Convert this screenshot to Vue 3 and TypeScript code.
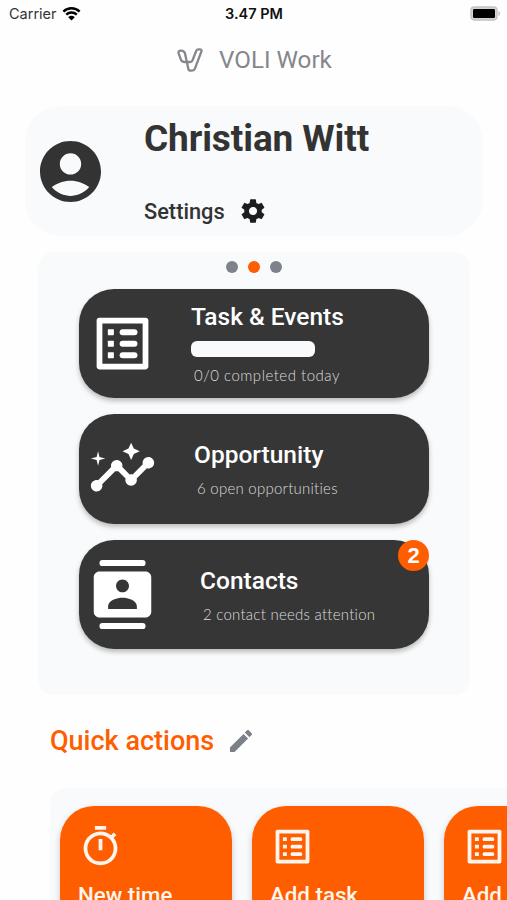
<script setup lang="ts">
interface Summary {
  kind: 'tasks' | 'opportunity' | 'contacts'
  title: string
  detail: string
  badge?: number
}

interface QuickAction {
  icon: 'timer' | 'list'
  label: string
}

const pages = [0, 1, 2]
const activePage = 1

const summaries: Summary[] = [
  { kind: 'tasks', title: 'Task & Events', detail: '0/0 completed today' },
  { kind: 'opportunity', title: 'Opportunity', detail: '6 open opportunities' },
  { kind: 'contacts', title: 'Contacts', detail: '2 contact needs attention', badge: 2 },
]

const actions: QuickAction[] = [
  { icon: 'timer', label: 'New time' },
  { icon: 'list', label: 'Add task' },
  { icon: 'list', label: 'Add event' },
]
</script>

<template>
  <main class="screen">
    <div class="status">
      <div class="carrier">
        <span>Carrier</span>
        <svg class="wifi" viewBox="0 0 18 14">
          <path d="M1.3 5.2a11 11 0 0 1 15.4 0" />
          <path d="M4 8.1a7.2 7.2 0 0 1 10 0" />
          <path class="wedge" d="M9 13.6 5.9 10.5a4.4 4.4 0 0 1 6.2 0z" />
        </svg>
      </div>
      <span class="clock">3.47 PM</span>
      <svg class="battery" viewBox="0 0 31 15">
        <rect x="1" y="1" width="26" height="13" rx="3.4" />
        <rect class="level" x="3" y="3" width="22" height="9" rx="1.2" />
        <path class="tip" d="M28.4 5v5c2.200-.7 2.200-4.300 0-5z" />
      </svg>
    </div>

    <header class="brand">
      <svg class="logo" viewBox="0 0 26 24">
        <path d="M3.400 2.600C1.700 2.800 1.200 4 1.700 5.500l2 5.700c.7 2 1.600 2.800 3.400 2.800h6c1.300 0 2-.5 2.400-1.700l3.700-9.300c.5-1.200 1.200-1.700 2.400-1.700h1c1.700 0 2.300 1 1.700 2.500l-6.400 16.800c-.6 1.500-1.400 2.100-2.900 2.100h-1.300c-1.400 0-2.100-.6-2.400-2L8 5.400C7.400 3.400 5.900 2.300 3.400 2.600z" />
      </svg>
      <span>VOLI Work</span>
    </header>

    <section class="profile">
      <svg class="avatar" viewBox="2 2 20 20">
        <path d="M12 2C6.480 2 2 6.480 2 12s4.480 10 10 10 10-4.480 10-10S17.520 2 12 2zm0 4c1.930 0 3.500 1.570 3.500 3.500S13.930 13 12 13s-3.500-1.570-3.500-3.500S10.070 6 12 6zm0 14c-2.030 0-4.430-.82-6.140-2.880C7.550 15.800 9.680 15 12 15s4.450.8 6.140 2.120C16.430 19.180 14.030 20 12 20z" />
      </svg>
      <div class="identity">
        <h1>Christian Witt</h1>
        <div class="settings">
          <span>Settings</span>
          <svg class="gear" viewBox="0 0 24 24">
            <path d="M19.430 12.980c.04-.32.07-.64.07-.98s-.03-.66-.07-.98l2.110-1.650c.19-.15.24-.42.12-.64l-2-3.460c-.12-.22-.39-.3-.61-.22l-2.490 1c-.52-.4-1.080-.73-1.690-.98l-.38-2.650C14.460 2.180 14.250 2 14 2h-4c-.25 0-.46.18-.49.42l-.38 2.650c-.61.25-1.170.59-1.690.98l-2.490-1c-.23-.09-.49 0-.61.22l-2 3.460c-.13.22-.07.49.12.64l2.110 1.650c-.04.32-.07.65-.07.98s.03.66.07.98l-2.110 1.650c-.19.15-.24.42-.12.64l2 3.460c.12.22.39.3.61.22l2.490-1c.52.4 1.080.73 1.690.98l.38 2.650c.03.24.24.42.49.42h4c.25 0 .46-.18.49-.42l.38-2.650c.61-.25 1.170-.59 1.690-.98l2.490 1c.23.09.49 0 .61-.22l2-3.460c.12-.22.07-.49-.12-.64l-2.110-1.650zM12 15.500c-1.930 0-3.500-1.570-3.500-3.500s1.570-3.500 3.500-3.500 3.500 1.570 3.500 3.500-1.570 3.500-3.500 3.500z" />
          </svg>
        </div>
      </div>
    </section>

    <section class="overview">
      <div class="dots">
        <i v-for="p in pages" :key="p" class="dot" :class="{ active: p === activePage }"></i>
      </div>
      <article v-for="s in summaries" :key="s.kind" class="card" :class="s.kind">
        <svg v-if="s.kind === 'tasks'" class="card-icon" viewBox="0 0 24 24">
          <path d="M19 5v14H5V5h14m1.100-2H3.900c-.5 0-.9.4-.9.9v16.200c0 .4.4.9.9.9h16.200c.4 0 .9-.5.9-.9V3.900c0-.5-.5-.9-.9-.9z" />
          <rect v-for="y in [7, 11, 15]" :key="y" x="11" :y="y" width="6.200" height="2.100" rx="1.050" />
          <rect v-for="y in [7, 11, 15]" :key="'b' + y" x="6.900" :y="y" width="2.100" height="2.100" rx=".2" />
        </svg>
        <svg v-else-if="s.kind === 'opportunity'" class="card-icon" viewBox="0 0 24 24">
          <path d="M21 8c-1.450 0-2.260 1.440-1.930 2.510l-3.550 3.560c-.3-.09-.74-.09-1.040 0l-2.550-2.550C12.270 10.450 11.460 9 10 9c-1.450 0-2.270 1.440-1.930 2.520l-4.560 4.550C2.440 15.740 1 16.550 1 18c0 1.100.9 2 2 2 1.450 0 2.260-1.440 1.930-2.510l4.550-4.560c.3.09.74.09 1.040 0l2.550 2.550C12.730 16.550 13.540 18 15 18c1.450 0 2.270-1.440 1.930-2.520l3.560-3.550c1.070.33 2.510-.48 2.510-1.930 0-1.100-.9-2-2-2z" />
          <path d="M15 9l.94-2.070L18 6l-2.060-.93L15 3l-.92 2.070L12 6l2.080.93zM3.500 11 4 9l2-.5L4 8l-.5-2L3 8l-2 .5L3 9z" />
        </svg>
        <svg v-else class="card-icon" viewBox="0 0 24 24">
          <rect x="4" y="0" width="16" height="2.100" rx="1" />
          <rect x="4" y="21.900" width="16" height="2.100" rx="1" />
          <path d="M20 4H4c-1.100 0-2 .9-2 2v12c0 1.100.9 2 2 2h16c1.100 0 2-.9 2-2V6c0-1.100-.9-2-2-2zm-8 2.750c1.240 0 2.250 1.010 2.250 2.250s-1.010 2.250-2.250 2.250S9.750 10.240 9.750 9 10.760 6.750 12 6.750zM17 17H7v-.9C7 14 10 13.100 12 13.100s5 .9 5 3z" />
        </svg>
        <div class="card-body">
          <h2>{{ s.title }}</h2>
          <div v-if="s.kind === 'tasks'" class="progress"></div>
          <p>{{ s.detail }}</p>
        </div>
        <span v-if="s.badge" class="badge">{{ s.badge }}</span>
      </article>
    </section>

    <div class="quick-head">
      <h2>Quick actions</h2>
      <svg class="pencil" viewBox="3 3 18 18">
        <path d="M3 17.460v3.040c0 .28.22.5.5.5h3.040c.13 0 .26-.05.35-.15L17.810 9.940l-3.750-3.750L3.150 17.100c-.1.1-.15.22-.15.36zM20.710 7.040a1 1 0 0 0 0-1.410l-2.340-2.340a1 1 0 0 0-1.410 0l-1.830 1.830 3.750 3.750z" />
      </svg>
    </div>

    <section class="quick">
      <article v-for="a in actions" :key="a.label" class="action">
        <svg v-if="a.icon === 'timer'" class="action-icon" viewBox="0 0 24 24">
          <path d="M9 1h6v2H9zM11 8h2v6h-2zM19.030 7.390l1.420-1.420c-.43-.51-.9-.99-1.410-1.410l-1.420 1.420C16.070 4.740 14.120 4 12 4a9 9 0 1 0 7.030 3.390zM12 20a7 7 0 1 1 0-14 7 7 0 0 1 0 14z" />
        </svg>
        <svg v-else class="action-icon" viewBox="0 0 24 24">
          <path d="M19 5v14H5V5h14m1.100-2H3.900c-.5 0-.9.4-.9.9v16.200c0 .4.4.9.9.9h16.200c.4 0 .9-.5.9-.9V3.900c0-.5-.5-.9-.9-.9z" />
          <rect v-for="y in [7, 11, 15]" :key="y" x="11" :y="y" width="6.200" height="2.100" rx=".8" />
          <rect v-for="y in [7, 11, 15]" :key="'b' + y" x="6.900" :y="y" width="2.100" height="2.100" rx=".2" />
        </svg>
        <span>{{ a.label }}</span>
      </article>
    </section>
  </main>
</template>

<style>
body {
  margin: 0;
  background: #fff;
}
</style>

<style scoped>
* {
  box-sizing: border-box;
}

.screen {
  width: 507px;
  height: 900px;
  overflow: hidden;
  background: #fefefe;
  font-family: Roboto, "Liberation Sans", sans-serif;
  color: #333;
}

h1,
h2,
p {
  margin: 0;
  white-space: nowrap;
}

svg {
  display: block;
  flex: none;
  fill: currentColor;
}

.status {
  display: grid;
  grid-template-columns: 1fr auto 1fr;
  align-items: center;
  height: 28px;
  padding: 0 6px 2px 9px;
  font-family: Inter, sans-serif;
  font-size: 14.500px;
  color: #111;
}

.carrier {
  display: flex;
  align-items: center;
  gap: 5px;
  color: #333;
}

.wifi {
  width: 19px;
  height: 15px;
  fill: none;
  stroke: #000;
  stroke-width: 2.300;
}

.wifi .wedge {
  fill: #000;
  stroke: none;
}

.clock {
  margin-right: 2px;
  font-weight: 600;
}

.battery {
  justify-self: end;
  width: 31px;
  height: 15px;
  fill: #d4d4d4;
  stroke: #c2c2c2;
  stroke-width: 1.400;
}

.battery .level {
  fill: #000;
  stroke: none;
}

.battery .tip {
  fill: #c2c2c2;
  stroke: none;
}

.brand {
  display: flex;
  align-items: center;
  gap: 16px;
  height: 64px;
  padding-left: 177px;
  font-size: 24.200px;
  color: #85878b;
}

.logo {
  width: 26px;
  height: 24px;
  fill: none;
  stroke: currentColor;
  stroke-width: 2.300;
}

.profile {
  display: flex;
  align-items: center;
  gap: 43px;
  width: 458px;
  height: 130px;
  margin: 14px 0 0 25px;
  padding-left: 15px;
  border-radius: 36px;
  background: #f8fafb;
}

.avatar {
  width: 61px;
  height: 61px;
}

.identity {
  display: flex;
  flex-direction: column;
  justify-content: space-between;
  height: 100%;
  padding: 11px 0 10px;
}

h1 {
  font-size: 37px;
  line-height: 44px;
  font-weight: 700;
  letter-spacing: -0.1px;
}

.settings {
  display: flex;
  align-items: center;
  gap: 14px;
  height: 30px;
  font-size: 21.800px;
  font-weight: 500;
}

.gear {
  width: 28px;
  height: 28px;
  color: #1c1d1f;
}

.overview {
  display: flex;
  flex-direction: column;
  gap: 16.500px;
  width: 432px;
  height: 443px;
  margin: 16px 0 0 38px;
  padding: 9px 41px 0;
  border-radius: 16px;
  background: #f8fafb;
}

.dots {
  display: flex;
  justify-content: center;
  gap: 10px;
  height: 11px;
}

.dot {
  flex: none;
  width: 12px;
  height: 12px;
  border-radius: 50%;
  background: #7e828a;
}

.dot.active {
  background: #ff5e00;
}

.card {
  position: relative;
  display: flex;
  flex: none;
  align-items: center;
  width: 350px;
  height: 109.300px;
  padding-left: 9px;
  border-radius: 35px;
  background: #363636;
  box-shadow: 0 3px 5px rgba(0, 0, 0, 0.25);
  color: #fff;
}

.card-icon {
  width: 69px;
  height: 69px;
}

.card-body {
  padding: 2px 0 0 37px;
}

.card h2 {
  font-size: 24.500px;
  line-height: 28px;
  font-weight: 500;
}

.card p {
  padding-left: 3px;
  font-family: Lato, sans-serif;
  font-size: 15px;
  line-height: 20px;
  font-weight: 300;
  letter-spacing: 0.25px;
  color: #dcdcdc;
}

.tasks .card-body {
  padding-left: 34px;
}

.tasks p {
  letter-spacing: 0.5px;
}

.contacts .card-body {
  padding-left: 43px;
}

.opportunity p,
.contacts p {
  margin-top: 9px;
}

.progress {
  width: 124px;
  height: 16px;
  margin: 10px 0 8px;
  border-radius: 6px;
  background: #f9fafb;
}

.badge {
  position: absolute;
  top: 0;
  right: 0;
  width: 31px;
  height: 31px;
  border-radius: 50%;
  background: #ff5e00;
  font-family: "Liberation Sans", sans-serif;
  font-size: 22px;
  line-height: 31px;
  font-weight: 700;
  text-align: center;
}

.quick-head {
  display: flex;
  align-items: center;
  gap: 16px;
  height: 93px;
  padding: 0 0 2px 50px;
  color: #7c8087;
}

.quick-head h2 {
  font-size: 27px;
  font-weight: 500;
  color: #ff5e00;
}

.pencil {
  width: 22px;
  height: 22px;
}

.quick {
  display: flex;
  gap: 20px;
  width: 640px;
  margin-left: 50px;
  padding: 18px 10px;
  border-radius: 16px;
  background: #f8fafb;
}

.action {
  flex: none;
  width: 172px;
  height: 172px;
  padding: 18px 18px;
  border-radius: 34px;
  background: #ff5e00;
  box-shadow: 0 3px 6px rgba(0, 0, 0, 0.2);
  color: #fdf6ee;
  font-size: 22.300px;
  font-weight: 500;
}

.action-icon {
  width: 45px;
  height: 45px;
  margin-bottom: 13px;
}
</style>
